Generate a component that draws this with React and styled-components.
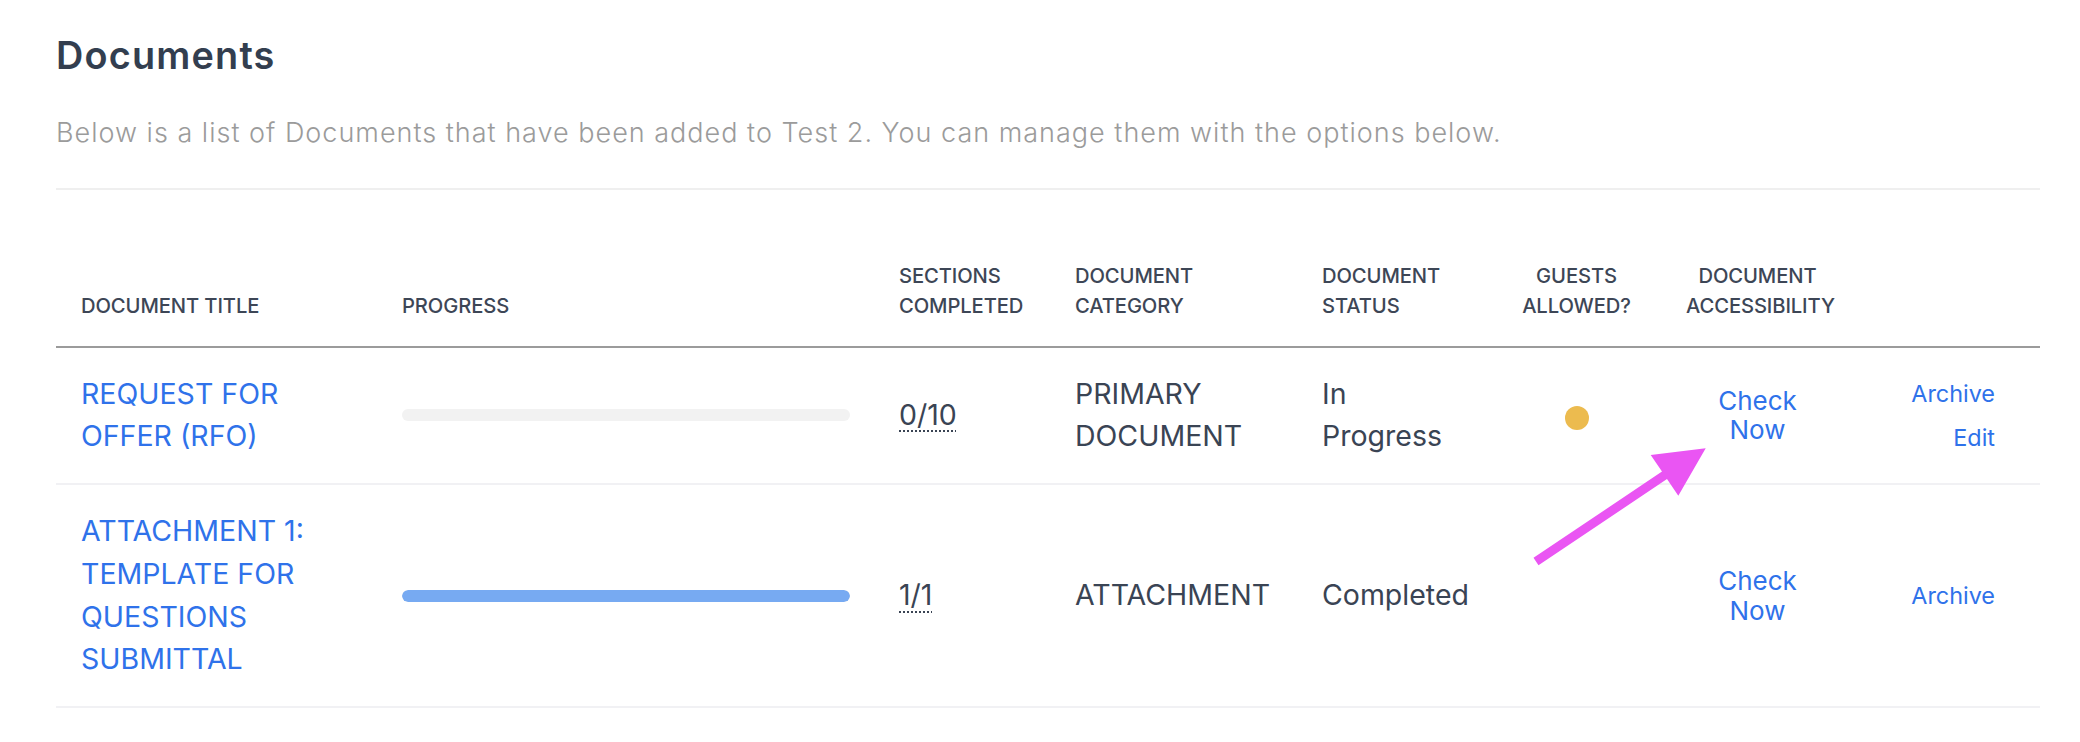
import React from 'react';
import styled, { createGlobalStyle } from 'styled-components';

const COLS = '321px 497px 176px 247px 195px 169px 193px 186px';

const Global = createGlobalStyle`
  html, body { margin: 0; padding: 0; background: #ffffff; }
  body { font-family: Inter, "Noto Sans", "Liberation Sans", sans-serif; }
  * { box-sizing: border-box; }
`;

const Page = styled.div`
  position: relative;
  width: 2080px;
  padding: 33px 40px 0 56px;
`;

const Heading = styled.h1`
  margin: 0;
  font-size: 37.8px;
  line-height: 45px;
  font-weight: 600;
  letter-spacing: 1.2px;
  color: #333e4f;
`;

const Lead = styled.p`
  margin: 35px 0 0;
  font-size: 27px;
  line-height: 40.5px;
  font-weight: 300;
  letter-spacing: 1px;
  color: #9b9b9b;
`;

const Divider = styled.hr`
  margin: 34px 0 0;
  border: 0;
  height: 2px;
  background: #efefef;
`;

const Table = styled.div`
  margin-top: 46px;
  width: 1984px;
`;

const HeadRow = styled.div`
  display: grid;
  grid-template-columns: ${COLS};
  align-items: end;
  border-bottom: 2px solid #9b9b9b;
`;

const Th = styled.div`
  padding: 25px ${(p) => p.$pr ?? 25}px 25px 25px;
  font-size: 20.2px;
  line-height: 30px;
  font-weight: 500;
  letter-spacing: -0.1px;
  text-transform: uppercase;
  color: #3d4656;
  text-align: ${(p) => p.$align || 'left'};
`;

const Row = styled.div`
  display: grid;
  grid-template-columns: ${COLS};
  align-items: center;
  border-bottom: 2px solid #f1f1f4;
`;

const Td = styled.div`
  padding: 25px ${(p) => p.$pr ?? 25}px 25px 25px;
  font-size: 28.5px;
  line-height: 42.75px;
  color: #3a4454;
  display: flex;
  flex-direction: column;
  align-items: ${(p) => p.$align || 'flex-start'};
`;

const DocLink = styled.a`
  color: #2f72ea;
  text-decoration: none;
  text-transform: uppercase;
`;

const Track = styled.div`
  width: 448px;
  height: 12px;
  border-radius: 6px;
  background: #f2f2f2;
  overflow: hidden;
`;

const Fill = styled.div`
  height: 100%;
  border-radius: 6px;
  background: #77aaf2;
`;

const Count = styled.abbr`
  text-decoration: underline dotted;
  text-decoration-thickness: 2px;
  text-underline-offset: 6px;
  cursor: help;
`;

const StatusText = styled.span`
  max-width: 150px;
`;

const Dot = styled.span`
  width: 24px;
  height: 24px;
  margin-top: 5px;
  border-radius: 50%;
  background: #ecbb4f;
`;

const CheckLink = styled.a`
  width: min-content;
  font-size: 26px;
  line-height: 29.5px;
  text-align: center;
  color: #2f72ea;
  text-decoration: none;
`;

const Actions = styled.div`
  display: flex;
  flex-direction: column;
  align-items: flex-end;
  gap: 9px;
`;

const ActionLink = styled.a`
  font-size: 23.4px;
  line-height: 35px;
  color: #2f72ea;
  text-decoration: none;
`;

const Annotation = styled.svg`
  position: absolute;
  left: 1520px;
  top: 440px;
  width: 200px;
  height: 130px;
  pointer-events: none;
`;

const docs = [
  {
    title: 'Request for Offer (RFO)',
    progress: 0,
    done: '0/10',
    category: 'PRIMARY DOCUMENT',
    status: 'In Progress',
    guests: true,
    actions: ['Archive', 'Edit'],
  },
  {
    title: 'Attachment 1: Template for Questions Submittal',
    progress: 100,
    done: '1/1',
    category: 'ATTACHMENT',
    status: 'Completed',
    guests: false,
    actions: ['Archive'],
  },
];

export default function App() {
  return (
    <Page>
      <Global />
      <Heading>Documents</Heading>
      <Lead>
        Below is a list of Documents that have been added to Test 2. You can manage them with the options below.
      </Lead>
      <Divider />
      <Table>
        <HeadRow>
          <Th>Document Title</Th>
          <Th>Progress</Th>
          <Th>Sections<br />Completed</Th>
          <Th>Document<br />Category</Th>
          <Th>Document<br />Status</Th>
          <Th $align="center">Guests<br />Allowed?</Th>
          <Th $align="center">Document<br />Accessibility</Th>
          <Th $pr={45} />
        </HeadRow>
        {docs.map((d) => (
          <Row key={d.title}>
            <Td>
              <DocLink href="#">{d.title}</DocLink>
            </Td>
            <Td>
              <Track>
                <Fill style={{ width: `${d.progress}%` }} />
              </Track>
            </Td>
            <Td>
              <Count title="Sections completed">{d.done}</Count>
            </Td>
            <Td>{d.category}</Td>
            <Td>
              <StatusText>{d.status}</StatusText>
            </Td>
            <Td $align="center">{d.guests && <Dot />}</Td>
            <Td $align="center">
              <CheckLink href="#">Check Now</CheckLink>
            </Td>
            <Td $align="flex-end" $pr={45}>
              <Actions>
                {d.actions.map((a) => (
                  <ActionLink key={a} href="#">{a}</ActionLink>
                ))}
              </Actions>
            </Td>
          </Row>
        ))}
      </Table>
      <Annotation viewBox="0 0 200 130">
        <polygon
          fill="#ea55f3"
          points="13.5,117.8 142,31.6 130.7,15 185.7,8.3 158.3,55.7 147,39.1 18.5,125.2"
        />
      </Annotation>
    </Page>
  );
}
